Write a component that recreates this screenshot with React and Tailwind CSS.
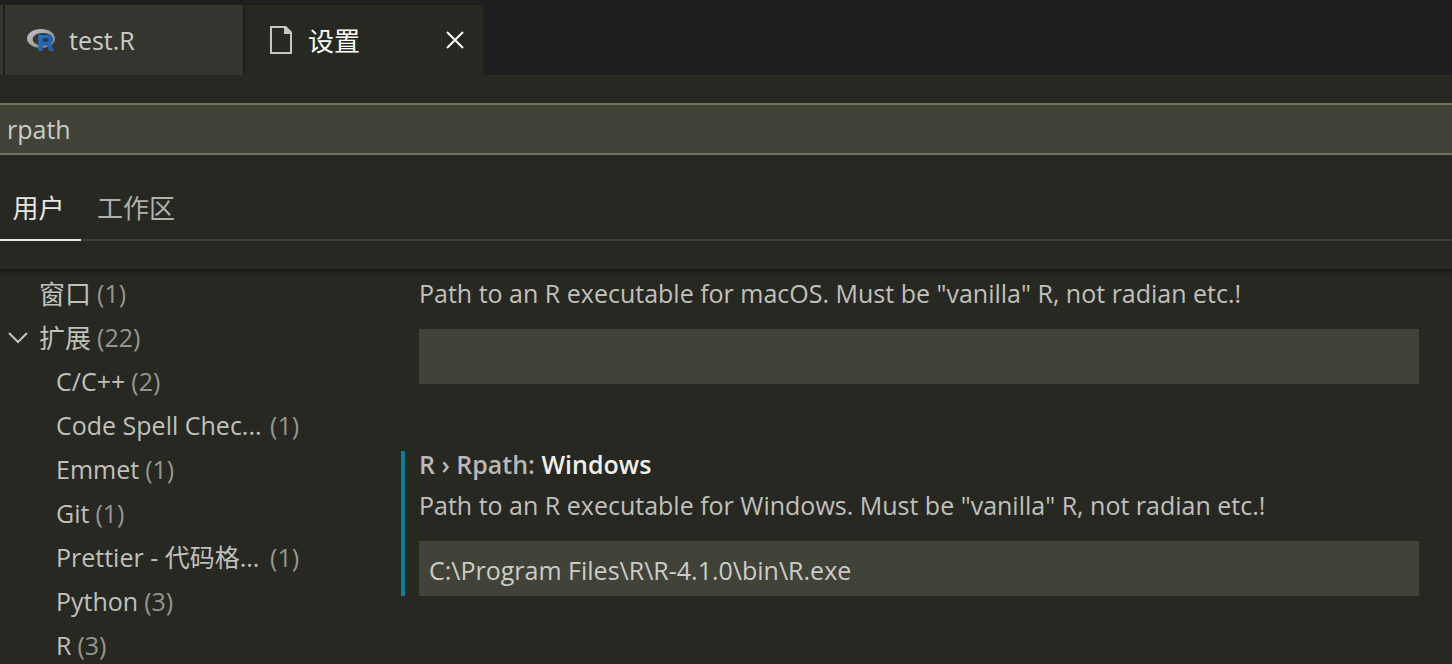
import React, { useState } from 'react';

const groups = [
  { name: '窗口', count: 1, level: 0 },
  { name: '扩展', count: 22, level: 0, open: true },
  { name: 'C/C++', count: 2, level: 1 },
  { name: 'Code Spell Chec...', count: 1, level: 1, cut: true },
  { name: 'Emmet', count: 1, level: 1 },
  { name: 'Git', count: 1, level: 1 },
  { name: 'Prettier - 代码格...', count: 1, level: 1, cut: true },
  { name: 'Python', count: 3, level: 1 },
  { name: 'R', count: 3, level: 1 }
];

function RLogo() {
  return (
    <svg width="28" height="22" viewBox="0 0 28 22" aria-hidden="true">
      <defs>
        <linearGradient id="ring" x1="0" y1="0" x2="1" y2="1">
          <stop offset="0" stopColor="#c4c5c9" />
          <stop offset="1" stopColor="#808185" />
        </linearGradient>
        <linearGradient id="letter" x1="0" y1="0" x2="1" y2="1">
          <stop offset="0" stopColor="#2370c8" />
          <stop offset="1" stopColor="#1b5cae" />
        </linearGradient>
      </defs>
      <path
        fill="url(#ring)"
        fillRule="evenodd"
        d="M14 0C21.700 0 28 4.200 28 9.500S21.700 19 14 19 0 14.800 0 9.500 6.300 0 14 0ZM16 4C10.300 4 5.700 6.800 5.700 10.200S10.300 16.500 16 16.500 26 13.600 26 10.200 21.700 4 16 4Z"
      />
      <path
        fill="url(#letter)"
        fillRule="evenodd"
        d="M11.300 6H20.500C24 6 26 7.800 26 10.600C26 12.800 24.800 14.200 23 14.700C23.800 15.200 24.300 15.700 24.800 16.600L27.200 22H22.300L20.300 17.300C19.900 16.400 19.400 16 18.500 16H15.800V22H11.300ZM15.800 9.300V12.700H19.300C20.700 12.700 21.500 12.100 21.500 11S20.700 9.300 19.300 9.300Z"
      />
    </svg>
  );
}

function FileIcon() {
  return (
    <svg width="22" height="28" viewBox="0 0 22 28" aria-hidden="true">
      <path d="M1 1H15L21 7V27H1Z" fill="none" stroke="#c5c5c5" strokeWidth="2" />
      <path d="M14 0H16L22 6V8H14Z" fill="#c5c5c5" />
    </svg>
  );
}

function EditorTabs() {
  return (
    <header className="flex gap-[2px] bg-[#1e1e1e] pt-[5px]">
      <div className="h-[70px] w-[3px] bg-[#34352f]" />
      <button className="flex h-[70px] w-[238px] items-center bg-[#34352f] pl-[22px] text-[#ccccc7]">
        <RLogo />
        <span className="ml-[14px] pt-[2px]">test.R</span>
      </button>
      <div className="flex h-[70px] w-[238px] items-center justify-between bg-[#272822] pr-[18px] pl-[25px] text-white">
        <button className="flex items-center gap-[16px] text-[26px]">
          <FileIcon />
          <span className="pt-[2px]">设置</span>
        </button>
        <button aria-label="关闭">
          <svg width="20" height="20" viewBox="0 0 20 20" aria-hidden="true">
            <path d="M2 2L18 18M18 2L2 18" stroke="#fff" strokeWidth="2" />
          </svg>
        </button>
      </div>
    </header>
  );
}

function GroupTree() {
  return (
    <nav className="w-[401px] shrink-0 pt-[3px]">
      <ul>
        {groups.map((group) => (
          <li key={group.name}>
            <a
              href="#"
              className={`flex h-[44px] items-center gap-[6px] whitespace-nowrap ${group.level ? 'pl-[56px]' : 'pl-[8px] text-[26px]'}`}
            >
              {group.level === 0 && (
                <span className="w-[25px]">
                  {group.open && (
                    <svg width="20" height="12" viewBox="0 0 20 12" aria-hidden="true">
                      <path d="M1 1L10 10L19 1" fill="none" stroke="#c5c5c5" strokeWidth="2" />
                    </svg>
                  )}
                </span>
              )}
              <span className={group.cut ? 'w-[208px]' : ''}>{group.name}</span>
              <span className="text-[25px] text-[#969690]">({group.count})</span>
            </a>
          </li>
        ))}
      </ul>
    </nav>
  );
}

function Setting({ id, title, description, defaultValue, modified }) {
  return (
    <section className={`border-l-4 pl-[14px] ${modified ? 'border-[#0c7d9d]' : 'border-transparent'}`}>
      {title && (
        <h2 className="mb-[8px] text-[25px] leading-[26px] font-semibold text-[#b9b9b5]">
          R › Rpath: <span className="text-[#efefec]">{title}</span>
        </h2>
      )}
      <label htmlFor={id} className="block leading-[40px] whitespace-nowrap">
        {description}
      </label>
      <input
        id={id}
        type="text"
        defaultValue={defaultValue}
        className="mt-[16px] block h-[55px] w-full bg-[#414339] px-[10px] pt-[2px] text-[#ccccc7] outline-none"
      />
    </section>
  );
}

export default function App() {
  const [query, setQuery] = useState('rpath');
  return (
    <div className="flex h-screen flex-col overflow-hidden bg-[#272822] font-['Open_Sans','Noto_Sans_CJK_SC',sans-serif] text-[25px] text-[#c0c0bc]">
      <EditorTabs />
      <input
        type="text"
        aria-label="搜索设置"
        value={query}
        onChange={(e) => setQuery(e.target.value)}
        className="mt-[28px] h-[52px] w-full shrink-0 border-y-2 border-[#75715e] bg-[#414339] px-[7px] text-[#ccccc7] outline-none"
      />
      <div className="mt-[20px] flex h-[66px] shrink-0 gap-[16px] border-b-2 border-[#3c3c3c] text-[26px]">
        <button className="-mb-[2px] w-[81px] border-b-2 border-[#e7e7e7] pt-[2px] pr-[4px] text-[#e7e7e7]">用户</button>
        <button className="pt-[2px] text-[#b0b0ac]">工作区</button>
      </div>
      <main className="mt-[28px] flex min-h-0 flex-1 overflow-hidden shadow-[inset_0_6px_6px_-6px_#000]">
        <GroupTree />
        <div className="flex min-w-0 flex-1 flex-col gap-[67px] pt-[4px] pr-[33px]">
          <Setting
            id="rpath-mac"
            description={'Path to an R executable for macOS. Must be "vanilla" R, not radian etc.!'}
          />
          <Setting
            id="rpath-windows"
            title="Windows"
            description={'Path to an R executable for Windows. Must be "vanilla" R, not radian etc.!'}
            defaultValue={'C:\\Program Files\\R\\R-4.1.0\\bin\\R.exe'}
            modified
          />
        </div>
      </main>
    </div>
  );
}
